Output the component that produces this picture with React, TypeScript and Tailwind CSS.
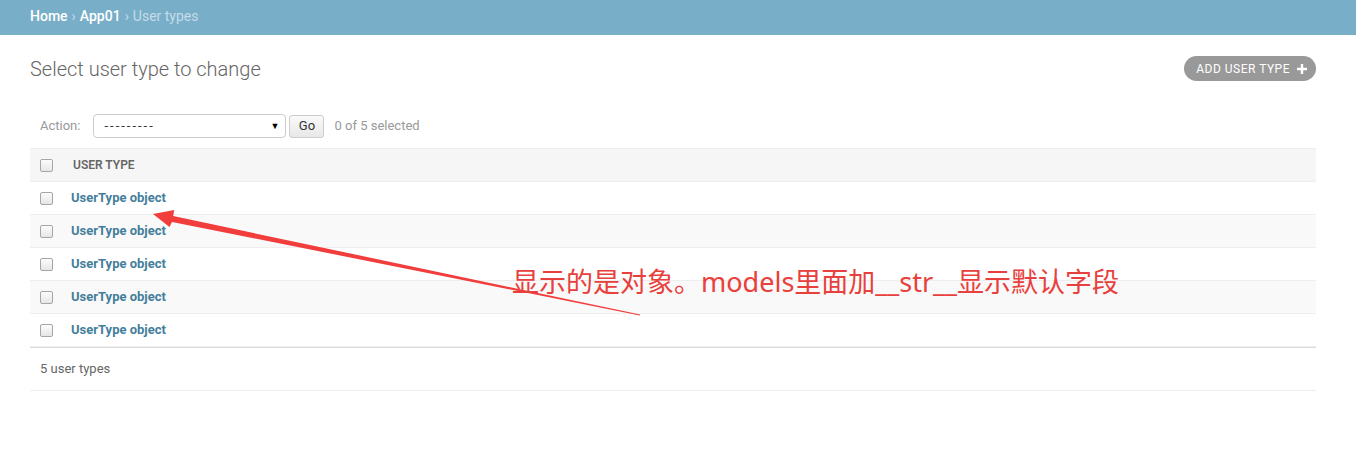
import React from 'react';

const rows = ['UserType object', 'UserType object', 'UserType object', 'UserType object', 'UserType object'];

const Check = () => (
  <span className="inline-block w-[13px] h-[13px] rounded-[2px] border border-[#a6a6a6] bg-gradient-to-b from-[#fcfcfc] to-[#e6e6e6]" />
);

const Arrow = () => (
  <svg className="absolute left-0 top-0 pointer-events-none" width="1356" height="459" viewBox="0 0 1356 459">
    <polygon
      points="153,214 174.2,210 173.2,216.1 640.1,314.6 639.9,315.4 172,221.9 169.5,227"
      fill="#f23d3d"
    />
  </svg>
);

export default function App() {
  return (
    <div className="relative w-full min-h-screen bg-white font-[Roboto,'Lucida_Grande',Verdana,sans-serif] text-[13px] text-[#333]">
      <div className="h-[35px] bg-[#79aec8] px-[30px] flex items-center pb-[3px] text-[14px] text-[#c4dce8]">
        <a className="text-white font-medium">Home</a>
        <span className="mx-[4px]">›</span>
        <a className="text-white font-medium">App01</a>
        <span className="mx-[4px]">›</span>
        <span>User types</span>
      </div>

      <div className="pl-[30px] pr-[40px] pt-[21px]">
        <div className="flex items-center justify-between">
          <h1 className="text-[20px] leading-[24px] font-light text-[#666]">Select user type to change</h1>
          <a className="h-[25px] flex items-center gap-[7px] rounded-full bg-[#999] pl-[12px] pr-[9px] text-[12px] text-white tracking-[0.5px] uppercase">
            Add user type
            <svg width="10" height="10" viewBox="0 0 10 10">
              <path d="M3.8 0h2.4v3.8H10v2.4H6.2V10H3.8V6.2H0V3.8h3.8z" fill="#fff" />
            </svg>
          </a>
        </div>

        <div className="mt-[23px] py-[10px] pl-[10px] flex items-center h-[44px] text-[#999] leading-[24px]">
          <span>Action:</span>
          <div className="ml-[13px] w-[193px] h-[24px] border border-[#ccc] rounded-[4px] flex items-center justify-between pl-[10px] pr-[6px] text-[#333] bg-white">
            <span className="tracking-[2px]">---------</span>
            <span className="text-[9px] text-black">▼</span>
          </div>
          <button className="ml-[3px] w-[35px] h-[23px] border border-[#ccc] rounded-[3px] bg-gradient-to-b from-[#fafafa] to-[#e8e8e8] text-[#333] text-[13px] leading-[20px]">
            Go
          </button>
          <span className="ml-[10px]">0 of 5 selected</span>
        </div>

        <div>
          <div className="h-[34px] flex items-center bg-[#f6f6f6] border-y border-[#eee] pl-[10px]">
            <Check />
            <span className="ml-[20px] text-[12px] font-semibold uppercase text-[#666]">User type</span>
          </div>
          {rows.map((r, i) => (
            <div
              key={i}
              className={`h-[33px] flex items-center pl-[10px] border-b border-[#eee] ${i % 2 === 1 ? 'bg-[#f9f9f9]' : 'bg-white'}`}
            >
              <Check />
              <a className="ml-[18px] font-bold text-[#447e9b]">{r}</a>
            </div>
          ))}
          <div className="border-t border-[#ddd] border-b border-b-[#eee] py-[10px] pl-[10px] leading-[22px] text-[#666]">
            5 user types
          </div>
        </div>
      </div>

      <Arrow />
      <div className="absolute left-[512px] top-[265px] text-[27px] leading-[34px] text-[#e8403c] whitespace-nowrap font-['Noto_Sans','Noto_Sans_CJK_SC',sans-serif]">
        显示的是对象。models里面加__str__显示默认字段
      </div>
    </div>
  );
}
